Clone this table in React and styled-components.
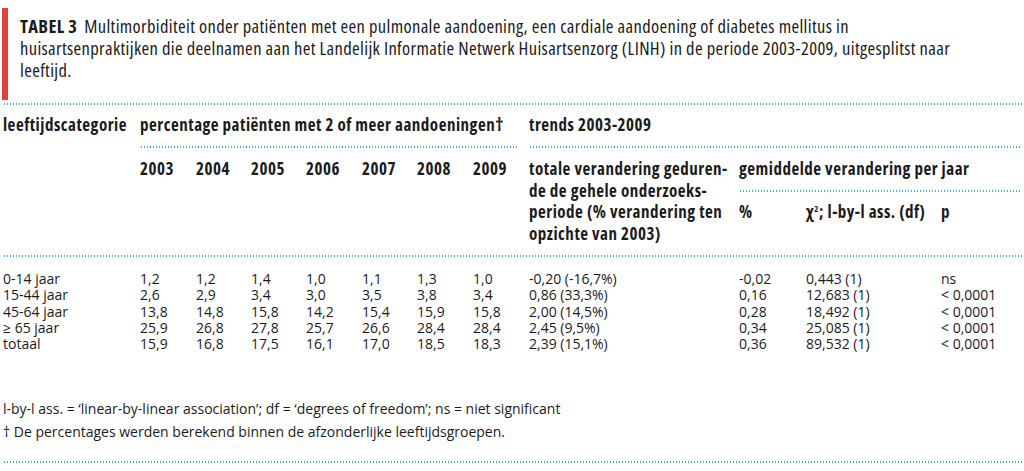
import React from "react";
import styled, { createGlobalStyle } from "styled-components";

const Global = createGlobalStyle`
  html, body { margin: 0; padding: 0; background: #ffffff; }
  body {
    font-family: "Open Sans", "Noto Sans", "Liberation Sans", sans-serif;
    color: #1b1b1b;
  }
`;

const Page = styled.div`
  width: 1024px;
  padding: 0 2px 0 3px;
  box-sizing: border-box;
`;

const TitleBlock = styled.div`
  display: flex;
  gap: 12px;
  padding-top: 8px;
  margin-left: -1px;
`;

const RedBar = styled.div`
  width: 6px;
  height: 92px;
  background: #e2433b;
  flex: none;
`;

const Caption = styled.p`
  margin: 7px 0 0;
  font-size: 18.5px;
  line-height: 22px;
  font-stretch: 75%;
  letter-spacing: 0.35px;
  font-weight: 400;
  white-space: nowrap;
`;

const Label = styled.b`
  font-weight: 700;
  margin-right: 7px;
`;

const Rule = styled.div`
  height: 2px;
  background-image: radial-gradient(circle, #3db3d3 0.8px, transparent 1.1px);
  background-size: 3px 2px;
  background-repeat: repeat-x;
  margin: ${(p) => p.$m || "0"};
`;

const cols = "137px 56px 55px 55px 56px 55px 56px 56px 210px 67px 135px 1fr";

const HeadGrid = styled.div`
  display: grid;
  grid-template-columns: ${cols};
  grid-template-rows: 22px 22px 22px 21px 22px auto;
  padding: 9px 0 11px;
  font-size: 17px;
  font-weight: 700;
  font-stretch: 75%;
  letter-spacing: 0.5px;
  line-height: 22px;
`;

const HCell = styled.div`
  grid-column: ${(p) => p.$c};
  grid-row: ${(p) => p.$r};
  white-space: nowrap;
`;

const HRule = styled(Rule)`
  grid-column: ${(p) => p.$c};
  grid-row: ${(p) => p.$r};
  align-self: center;
  margin-right: ${(p) => p.$mr || "0"};
`;

const TallCell = styled(HCell)`
  line-height: 21.5px;
`;

const Sup = styled.sup`
  font-size: 9px;
  vertical-align: 6px;
  line-height: 0;
`;

const DataGrid = styled.div`
  display: grid;
  grid-template-columns: ${cols};
  padding-top: 14px;
  font-size: 14px;
  line-height: 16.25px;
`;

const DCell = styled.div`
  white-space: nowrap;
`;

const Notes = styled.div`
  margin-top: 45px;
  margin-bottom: 18px;
  font-size: 14px;
  line-height: 23px;
  white-space: nowrap;
`;

const years = ["2003", "2004", "2005", "2006", "2007", "2008", "2009"];

const rows = [
  ["0-14 jaar", "1,2", "1,2", "1,4", "1,0", "1,1", "1,3", "1,0", "-0,20 (-16,7%)", "-0,02", "0,443 (1)", "ns"],
  ["15-44 jaar", "2,6", "2,9", "3,4", "3,0", "3,5", "3,8", "3,4", "0,86 (33,3%)", "0,16", "12,683 (1)", "< 0,0001"],
  ["45-64 jaar", "13,8", "14,8", "15,8", "14,2", "15,4", "15,9", "15,8", "2,00 (14,5%)", "0,28", "18,492 (1)", "< 0,0001"],
  ["≥ 65 jaar", "25,9", "26,8", "27,8", "25,7", "26,6", "28,4", "28,4", "2,45 (9,5%)", "0,34", "25,085 (1)", "< 0,0001"],
  ["totaal", "15,9", "16,8", "17,5", "16,1", "17,0", "18,5", "18,3", "2,39 (15,1%)", "0,36", "89,532 (1)", "< 0,0001"],
];

export default function App() {
  return (
    <>
      <Global />
      <Page>
        <TitleBlock>
          <RedBar />
          <Caption>
            <Label>TABEL 3</Label>Multimorbiditeit onder patiënten met een pulmonale aandoening, een cardiale aandoening of diabetes mellitus in
            <br />
            huisartsenpraktijken die deelnamen aan het Landelijk Informatie Netwerk Huisartsenzorg (LINH) in de periode 2003-2009, uitgesplitst naar
            <br />
            leeftijd.
          </Caption>
        </TitleBlock>
        <Rule $m="3px 0 0" />
        <HeadGrid>
          <HCell $c="1" $r="1">leeftijdscategorie</HCell>
          <HCell $c="2 / 9" $r="1">percentage patiënten met 2 of meer aandoeningen†</HCell>
          <HCell $c="9 / 13" $r="1">trends 2003-2009</HCell>
          <HRule $c="2 / 9" $r="2" $mr="12px" />
          <HRule $c="9 / 13" $r="2" />
          {years.map((y, i) => (
            <HCell key={y} $c={String(i + 2)} $r="3">{y}</HCell>
          ))}
          <TallCell $c="9" $r="3 / 7">
            totale verandering geduren-
            <br />
            de de gehele onderzoeks-
            <br />
            periode (% verandering ten
            <br />
            opzichte van 2003)
          </TallCell>
          <HCell $c="10 / 13" $r="3">gemiddelde verandering per jaar</HCell>
          <HRule $c="10 / 13" $r="4" />
          <HCell $c="10" $r="5">%</HCell>
          <HCell $c="11" $r="5">
            χ<Sup>2</Sup>; l-by-l ass. (df)
          </HCell>
          <HCell $c="12" $r="5">p</HCell>
        </HeadGrid>
        <Rule />
        <DataGrid>
          {rows.map((r) =>
            r.map((v, i) => <DCell key={r[0] + i}>{v}</DCell>)
          )}
        </DataGrid>
        <Notes>
          l-by-l ass. = ‘linear-by-linear association’; df = ‘degrees of freedom’; ns = niet significant
          <br />
          † De percentages werden berekend binnen de afzonderlijke leeftijdsgroepen.
        </Notes>
        <Rule />
      </Page>
    </>
  );
}
